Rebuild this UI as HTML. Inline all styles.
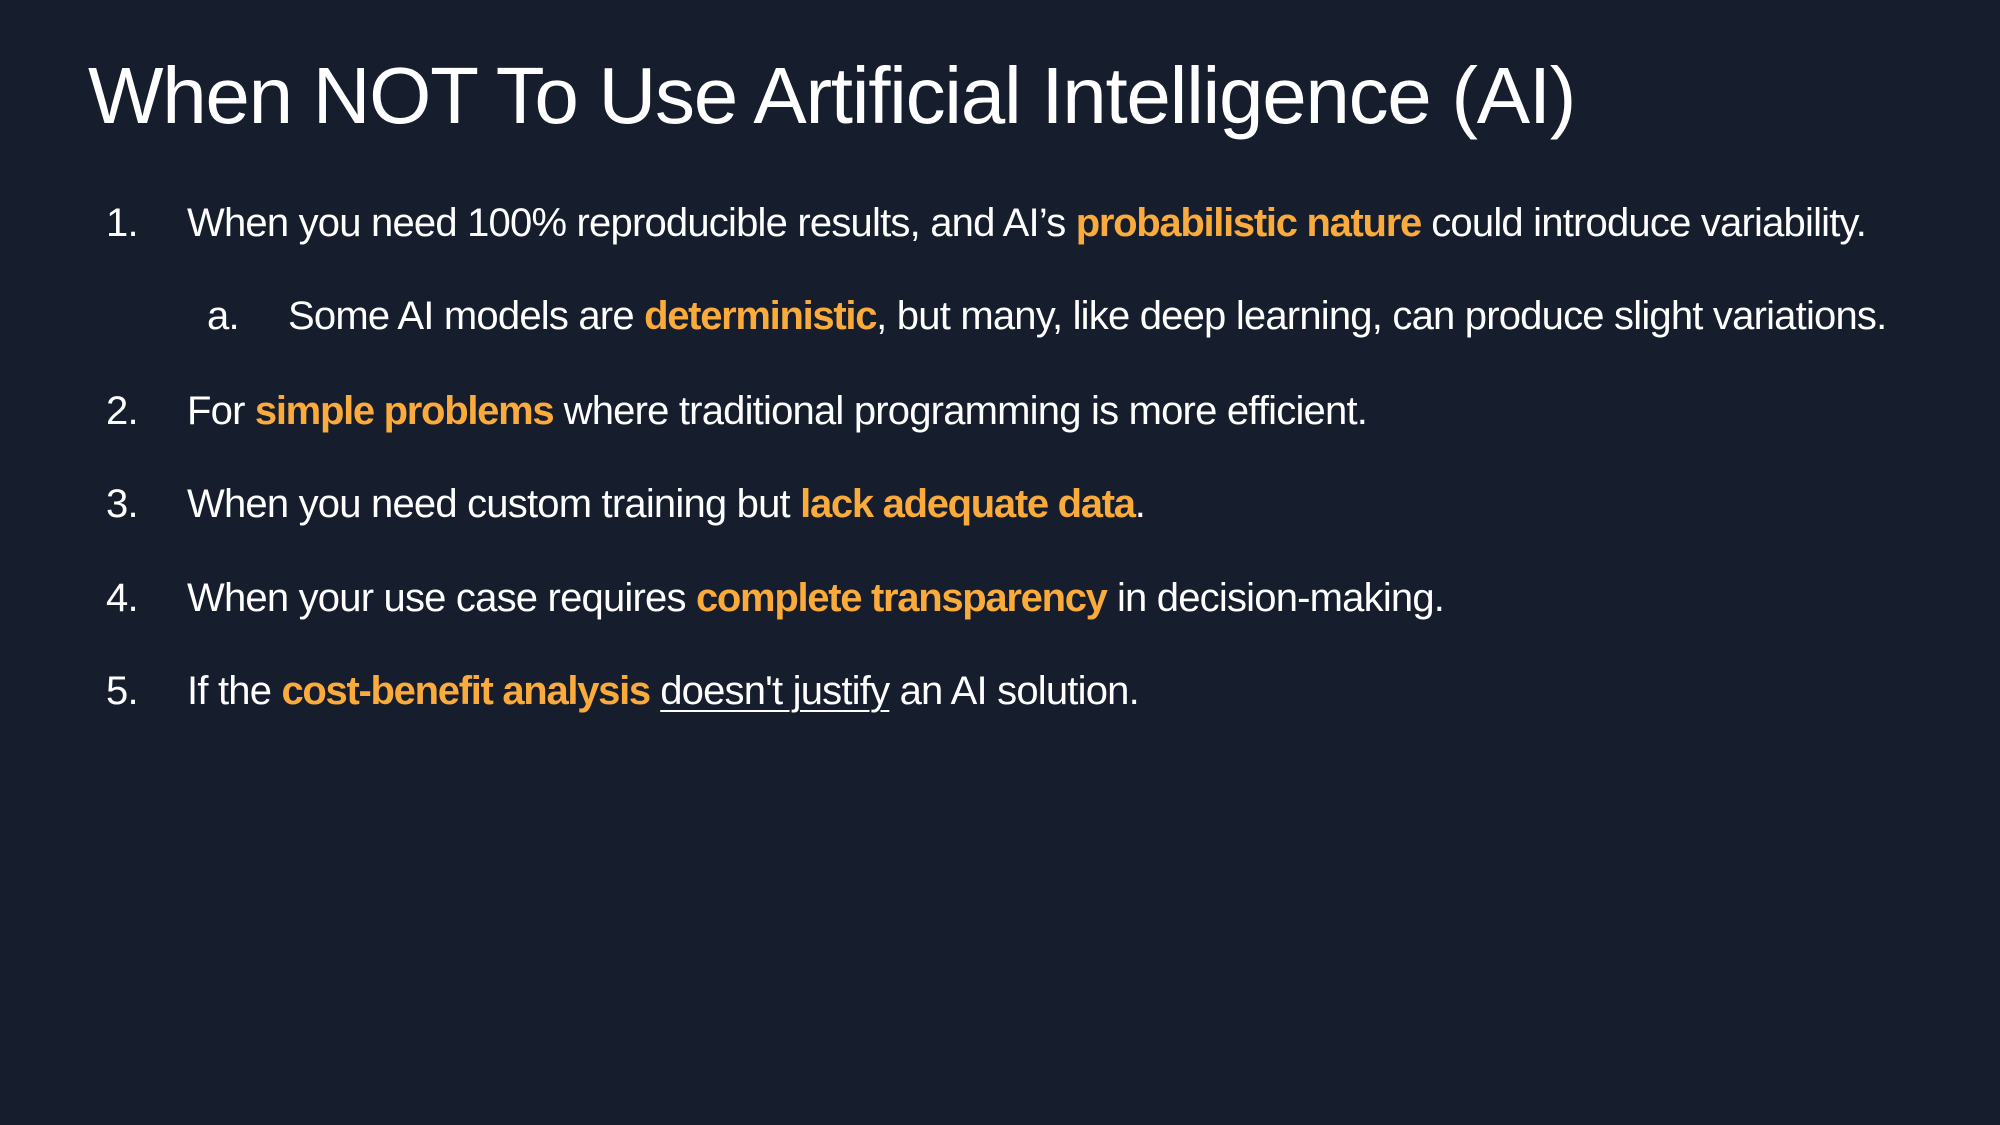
<!DOCTYPE html>
<html><head><meta charset="utf-8"><style>
html,body{margin:0;padding:0;}
body{width:2000px;height:1125px;background:#161e2d;position:relative;overflow:hidden;font-family:"Liberation Sans",sans-serif;color:#fff;}
.t{position:absolute;left:88px;top:56px;font-size:80px;line-height:1;white-space:nowrap;letter-spacing:-1.3px;}
.l{position:absolute;font-size:40px;line-height:1;white-space:nowrap;letter-spacing:-0.8px;}
.o{color:#fbab3c;font-weight:bold;letter-spacing:-1.3px;}
u{text-decoration-thickness:2px;text-underline-offset:6px;}
</style></head><body>
<div class="t">When NOT To Use Artificial Intelligence (AI)</div>
<div class="l" style="left:106px;top:203px">1.</div>
<div class="l" style="left:187px;top:203px">When you need 100% reproducible results, and AI’s <span class="o">probabilistic nature</span> could introduce variability.</div>
<div class="l" style="left:207px;top:296px">a.</div>
<div class="l" style="left:288px;top:296px">Some AI models are <span class="o">deterministic</span>, but many, like deep learning, can produce slight variations.</div>
<div class="l" style="left:106px;top:391px">2.</div>
<div class="l" style="left:187px;top:391px">For <span class="o">simple problems</span> where traditional programming is more efficient.</div>
<div class="l" style="left:106px;top:484px">3.</div>
<div class="l" style="left:187px;top:484px">When you need custom training but <span class="o">lack adequate data</span>.</div>
<div class="l" style="left:106px;top:578px">4.</div>
<div class="l" style="left:187px;top:578px">When your use case requires <span class="o">complete transparency</span> in decision-making.</div>
<div class="l" style="left:106px;top:671px">5.</div>
<div class="l" style="left:187px;top:671px">If the <span class="o">cost-benefit analysis</span> <u>doesn't justify</u> an AI solution.</div>
</body></html>
